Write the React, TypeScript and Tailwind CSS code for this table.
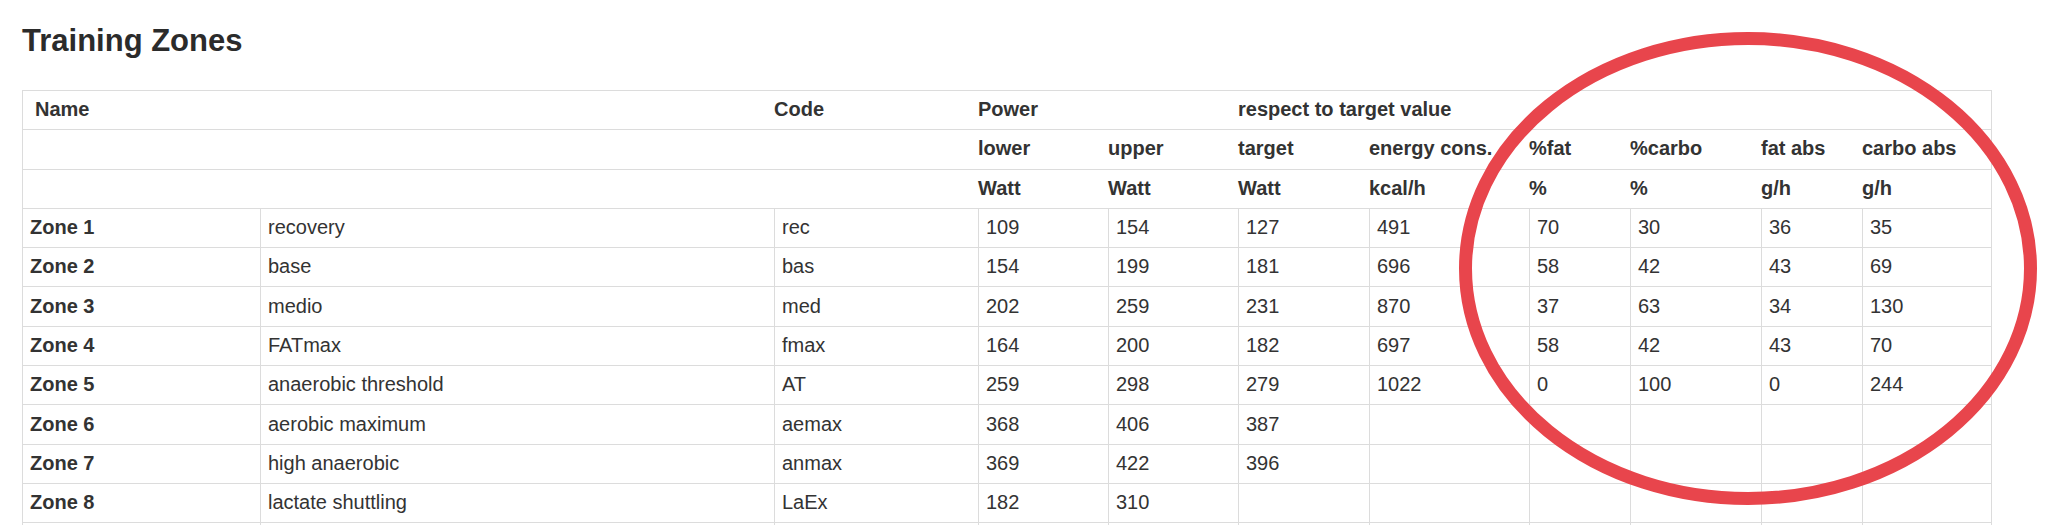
import React from "react";

const GRID =
  "grid grid-cols-[237px_514px_204px_130px_130px_131px_160px_101px_131px_101px_129px]";

type Row = [string, string, string, string, string, string, string, string, string, string, string];

const rows: Row[] = [
  ["Zone 1", "recovery", "rec", "109", "154", "127", "491", "70", "30", "36", "35"],
  ["Zone 2", "base", "bas", "154", "199", "181", "696", "58", "42", "43", "69"],
  ["Zone 3", "medio", "med", "202", "259", "231", "870", "37", "63", "34", "130"],
  ["Zone 4", "FATmax", "fmax", "164", "200", "182", "697", "58", "42", "43", "70"],
  ["Zone 5", "anaerobic threshold", "AT", "259", "298", "279", "1022", "0", "100", "0", "244"],
  ["Zone 6", "aerobic maximum", "aemax", "368", "406", "387", "", "", "", "", ""],
  ["Zone 7", "high anaerobic", "anmax", "369", "422", "396", "", "", "", "", ""],
  ["Zone 8", "lactate shuttling", "LaEx", "182", "310", "", "", "", "", "", ""],
  ["", "", "", "", "", "", "", "", "", "", ""],
];

function HeadCell({ children, className = "" }: { children?: React.ReactNode; className?: string }) {
  return (
    <div className={`flex items-center pb-px font-bold whitespace-nowrap ${className}`}>{children}</div>
  );
}

export default function App() {
  return (
    <div
      className="relative w-[2054px] h-[525px] overflow-hidden bg-white text-[#333] pl-[22px]"
      style={{ fontFamily: '"Liberation Sans", Arial, Helvetica, sans-serif' }}
    >
      <h1 className="mt-[24px] text-[31px] leading-[34px] font-bold text-[#2b2b2b]">Training Zones</h1>

      <div className="mt-[32px] w-[1970px] border-x border-t border-[#dcdcdc] text-[20px] leading-[23px]">
        {/* header row 1 */}
        <div className={`${GRID} h-[39.3px] border-b border-[#dcdcdc]`}>
          <HeadCell className="col-span-2 pl-[12px]">Name</HeadCell>
          <HeadCell>Code</HeadCell>
          <HeadCell className="col-span-2">Power</HeadCell>
          <HeadCell className="col-span-6">respect to target value</HeadCell>
        </div>
        {/* header row 2 */}
        <div className={`${GRID} h-[39.3px] border-b border-[#dcdcdc]`}>
          <HeadCell />
          <HeadCell />
          <HeadCell />
          <HeadCell>lower</HeadCell>
          <HeadCell>upper</HeadCell>
          <HeadCell>target</HeadCell>
          <HeadCell>energy cons.</HeadCell>
          <HeadCell>%fat</HeadCell>
          <HeadCell>%carbo</HeadCell>
          <HeadCell>fat abs</HeadCell>
          <HeadCell>carbo abs</HeadCell>
        </div>
        {/* header row 3 */}
        <div className={`${GRID} h-[39.3px] border-b border-[#dcdcdc]`}>
          <HeadCell />
          <HeadCell />
          <HeadCell />
          <HeadCell>Watt</HeadCell>
          <HeadCell>Watt</HeadCell>
          <HeadCell>Watt</HeadCell>
          <HeadCell>kcal/h</HeadCell>
          <HeadCell>%</HeadCell>
          <HeadCell>%</HeadCell>
          <HeadCell>g/h</HeadCell>
          <HeadCell>g/h</HeadCell>
        </div>
        {/* body */}
        {rows.map((r, i) => (
          <div key={i} className={`${GRID} h-[39.3px] border-b border-[#dcdcdc]`}>
            {r.map((c, j) => (
              <div
                key={j}
                className={`flex items-center pb-px pl-[7px] whitespace-nowrap ${
                  j === 0 ? "font-bold" : "border-l border-[#dcdcdc]"
                }`}
              >
                {c}
              </div>
            ))}
          </div>
        ))}
      </div>

      {/* red annotation ellipse */}
      <svg className="pointer-events-none absolute left-0 top-0" width="2054" height="525" viewBox="0 0 2054 525">
        <ellipse cx="1748" cy="268.5" rx="282.5" ry="230" fill="none" stroke="#e8454c" strokeWidth="13" />
      </svg>
    </div>
  );
}
